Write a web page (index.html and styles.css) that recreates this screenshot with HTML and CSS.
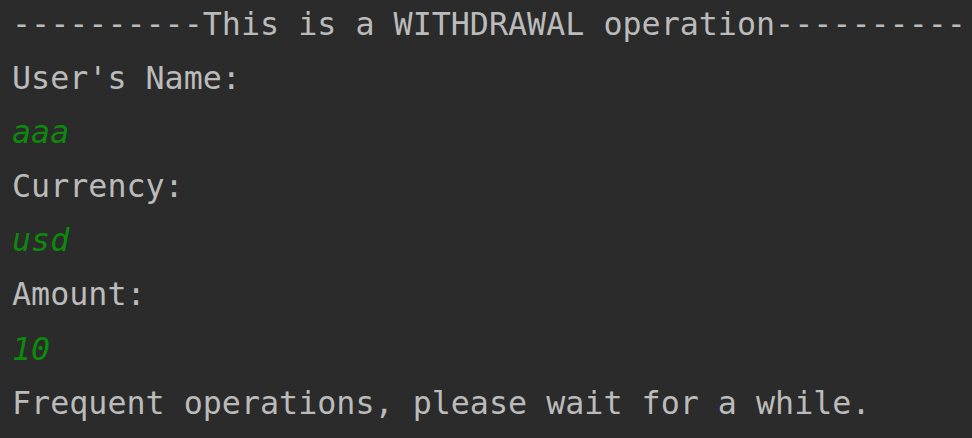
FILE: index.html
```html
<!DOCTYPE html>
<html>
<head>
<meta charset="utf-8">
<link rel="stylesheet" href="styles.css">
</head>
<body>
<div class="console">
<div class="line">----------This is a WITHDRAWAL operation----------</div>
<div class="line">User's Name:</div>
<div class="line input">aaa</div>
<div class="line">Currency:</div>
<div class="line input">usd</div>
<div class="line">Amount:</div>
<div class="line input">10</div>
<div class="line">Frequent operations, please wait for a while.</div>
</div>
</body>
</html>
```
FILE: styles.css
```css
html, body {
  margin: 0;
  padding: 0;
  background: #2b2b2b;
  height: 100%;
  overflow: hidden;
}
.console {
  margin-top: -3px;
  padding-left: 12px;
  font-family: "DejaVu Sans Mono", "Liberation Mono", monospace;
  font-size: 31.7px;
  line-height: 54.1px;
  color: #bbbbbb;
}
.line {
  white-space: pre;
}
.input {
  color: #0b8a0b;
  font-style: italic;
}
```
